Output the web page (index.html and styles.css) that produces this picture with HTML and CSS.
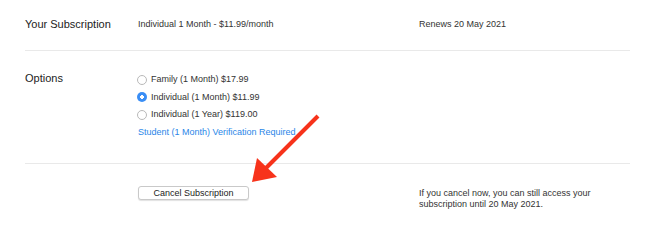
FILE: index.html
```html
<!DOCTYPE html>
<html>
<head>
    <title>Subscription</title>
    <link rel="stylesheet" href="styles.css">
</head>

<body>
    <div class="container">
        <div class="row row-top">
            <div class="label">Your Subscription</div>
            <div class="value">Individual 1 Month - $11.99/month</div>
            <div class="value">Renews 20 May 2021</div>
        </div>

        <div class="row row-options">
            <div class="label">Options</div>
            <div class="options">
                <label class="option"><input type="radio" name="plan"> Family (1 Month) $17.99</label>
                <label class="option"><input type="radio" name="plan" checked> Individual (1 Month) $11.99</label>
                <label class="option"><input type="radio" name="plan"> Individual (1 Year) $119.00</label>
                <a href="#" class="student-link">Student (1 Month) Verification Required</a>
            </div>
            <div></div>
        </div>

        <div class="row row-cancel">
            <div></div>
            <div><button class="cancel-button">Cancel Subscription</button></div>
            <div class="note">If you cancel now, you can still access your subscription until 20 May 2021.</div>
        </div>
    </div>

    <!-- annotation arrow -->
    <svg class="arrow" width="650" height="227" viewBox="0 0 650 227">
        <line x1="318" y1="116" x2="266" y2="168" stroke="#f7331b" stroke-width="4"/>
        <polygon points="252,182 257,158 277,177" fill="#f7331b"/>
    </svg>
</body>
</html>
```

FILE: styles.css
```css
body {
    margin: 0;
    font-family: "Liberation Sans", Arial, sans-serif;
    background: #fff;
    color: #333;
}

.container {
    width: 605px;
    margin-left: 25px;
}

.row {
    display: grid;
    grid-template-columns: 113px 281px 1fr;
}

.row-top {
    padding: 17px 0 19px;
    border-bottom: 1px solid #e9e9e9;
    align-items: center;
}

.row-options {
    padding: 20px 0 22px;
    border-bottom: 1px solid #e9e9e9;
}

.row-cancel {
    padding: 22px 0 0;
}

.label {
    font-size: 11px;
    line-height: 14px;
    color: #222;
}

.row-options .label {
    line-height: 17px;
    margin-top: -1px;
}

.value {
    font-size: 9px;
    line-height: 14px;
    color: #333;
}

.options {
    display: flex;
    flex-direction: column;
    font-size: 9px;
    line-height: 17.6px;
}

.option {
    display: flex;
    align-items: center;
    color: #333;
    margin-left: -1px;
}

.option input {
    appearance: none;
    -webkit-appearance: none;
    width: 10px;
    height: 10px;
    margin: 0 4px 0 0;
    border: 1px solid #b9b9b9;
    border-radius: 50%;
    background: #fff;
    box-sizing: border-box;
}

.option input:checked {
    border: none;
    background: radial-gradient(circle, #fff 0 1.6px, #3a8ef5 2px);
}

.student-link {
    color: #2a86e8;
    text-decoration: none;
}

.cancel-button {
    display: block;
    font-family: "Liberation Sans", Arial, sans-serif;
    font-size: 9px;
    color: #222;
    width: 111px;
    height: 14px;
    padding: 0;
    background: #fff;
    border: 1px solid #c9c9c9;
    border-radius: 3px;
    box-shadow: 0 1px 1px rgba(0, 0, 0, 0.12);
    line-height: 12px;
}

.note {
    font-size: 9px;
    line-height: 11px;
    color: #333;
    width: 185px;
    margin-top: 2px;
}

.arrow {
    position: absolute;
    top: 0;
    left: 0;
    pointer-events: none;
}
```
